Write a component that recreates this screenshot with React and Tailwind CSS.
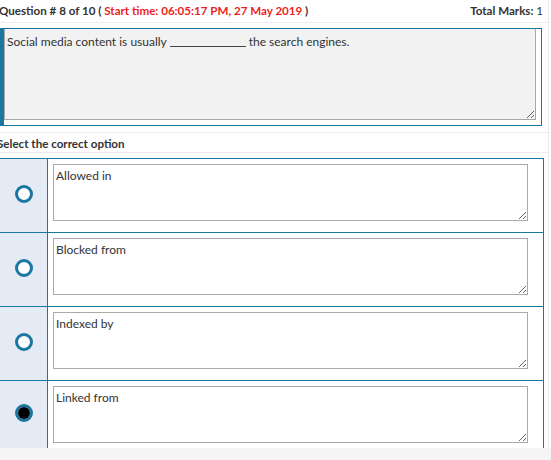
import React from "react";

const options = [
  { label: "Allowed in", checked: false },
  { label: "Blocked from", checked: false },
  { label: "Indexed by", checked: false },
  { label: "Linked from", checked: true },
];

function Radio({ checked }) {
  return (
    <span className="flex h-[18px] w-[18px] items-center justify-center rounded-full border-[3px] border-[#1b77a0] bg-white">
      {checked && <span className="h-[12px] w-[12px] rounded-full bg-black" />}
    </span>
  );
}

export default function App() {
  return (
    <div
      className="relative h-[460px] w-[551px] overflow-hidden bg-white text-[#333]"
      style={{ fontFamily: "Lato, 'Open Sans', sans-serif" }}
    >
      <div className="w-[549px] border-r border-[#e8e8e8] bg-white">
        {/* heading */}
        <div className="flex h-[23px] items-center justify-between border-b border-[#ececec] pr-[5px] text-[11.6px] font-bold">
          <div className="-ml-[1px]">
            Question # 8 of 10 ({" "}
            <span className="text-[#ec1f1c]">Start time: 06:05:17 PM, 27 May 2019</span> )
          </div>
          <div>
            Total Marks: <span className="font-normal">1</span>
          </div>
        </div>

        {/* question */}
        <div className="mt-[5px] w-[542px] border border-l-4 border-[#1b77a0] pb-[5px] pr-[5px]">
          <div className="h-[91px] resize-y overflow-auto border border-t-0 border-[#a9a9a9] bg-[#f2f2f2] px-[2px] pt-[5px] text-[12px] leading-[16px] text-[#333]">
            Social media content is usually{" "}
            <span className="inline-block w-[76px] translate-y-[1px] border-b border-[#444] align-baseline" />{" "}
            the search engines.
          </div>
        </div>

        <div className="mt-[6px] border-t border-[#ececec]" />
        <div className="-ml-[3px] flex h-[19px] items-center pt-[2px] text-[11.6px] font-bold">
          Select the correct option
        </div>
        <div className="border-t border-[#ececec]" />

        {/* answer options */}
        <div className="-ml-[1px] mt-[5px] w-[545px] border border-b-0 border-[#1b77a0]">
          {options.map((o, i) => (
            <div
              key={o.label}
              className={`flex ${i < 3 ? "h-[74px] border-b border-[#1b77a0]" : "h-[67px]"}`}
            >
              <div className="flex w-[48px] items-center justify-center border-r border-[#1b77a0] bg-[#e4ebf5] pb-[4px] pl-[1px]">
                <Radio checked={o.checked} />
              </div>
              <div className="flex-1 pl-[5px] pr-[15px] pt-[5px]">
                <div className="h-[57px] resize-y overflow-auto border border-[#a9a9a9] bg-white px-[2px] pt-[3px] text-[12px] leading-[16px] text-[#333]">
                  {o.label}
                </div>
              </div>
            </div>
          ))}
        </div>
      </div>
      <div className="h-[20px] bg-[#f5f5f5]" />
    </div>
  );
}
